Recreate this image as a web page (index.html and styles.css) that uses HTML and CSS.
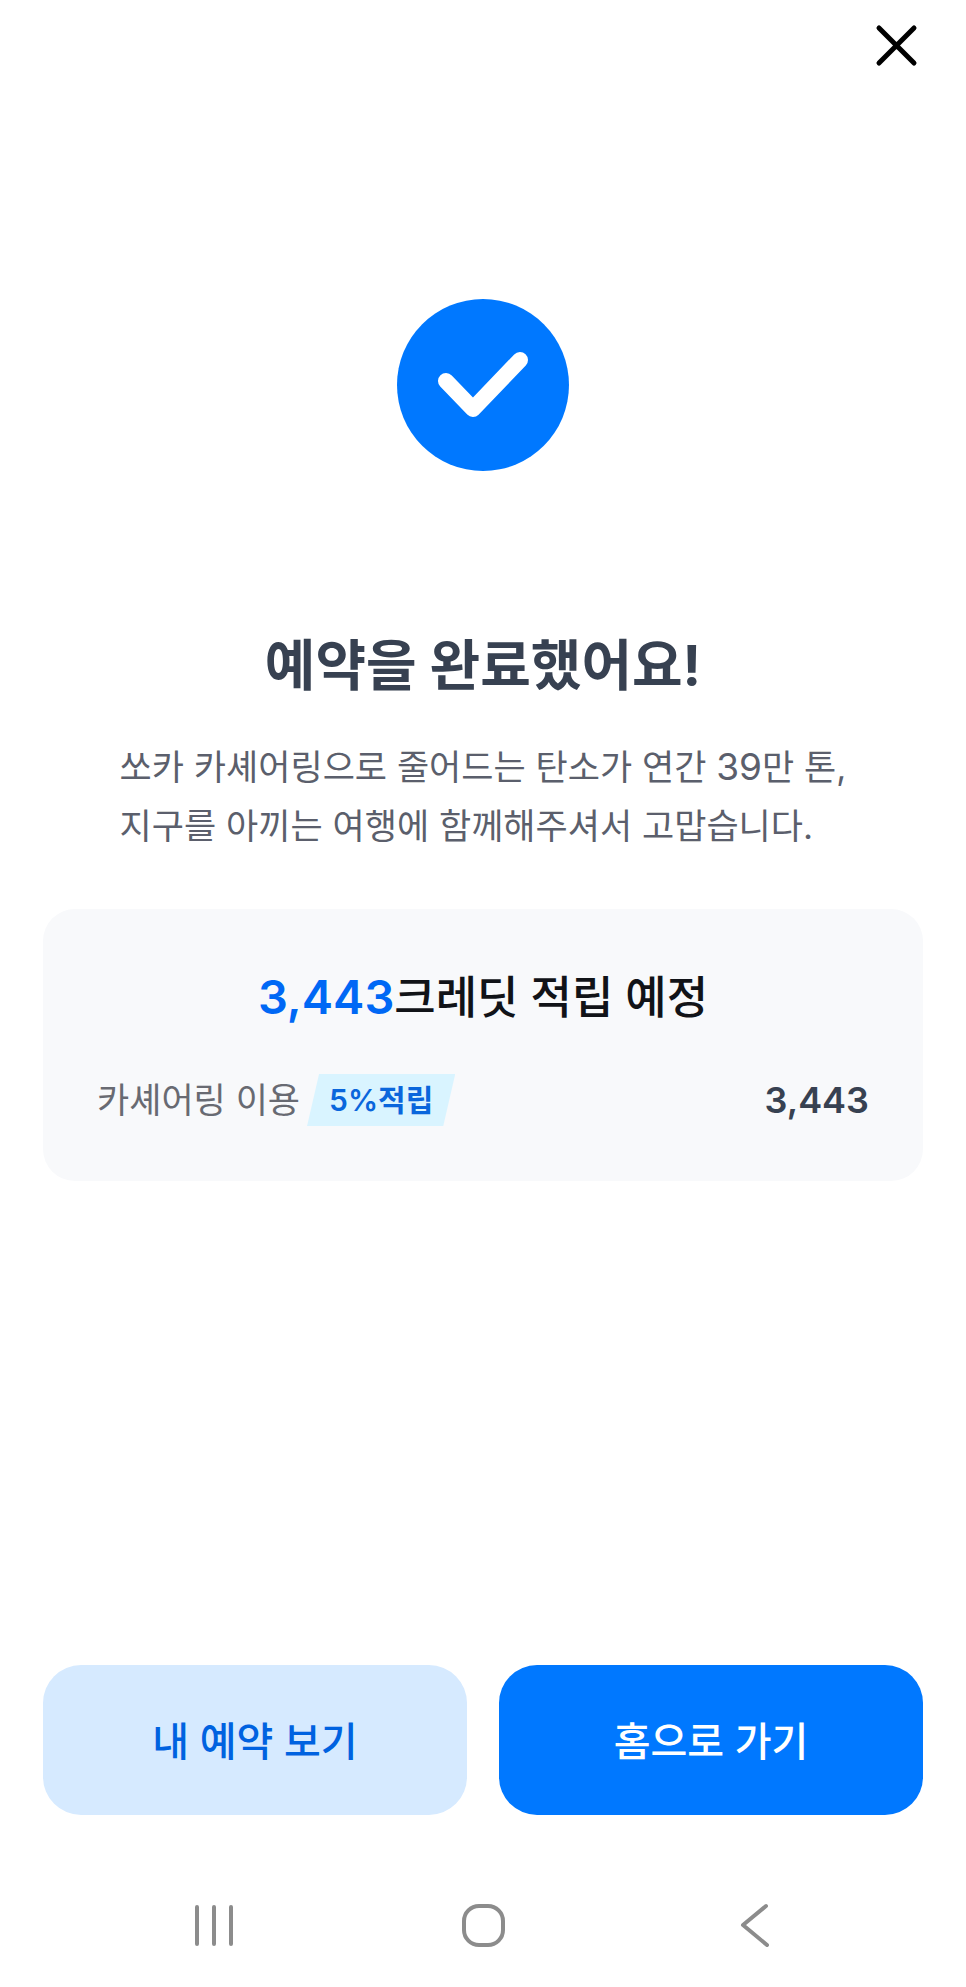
FILE: index.html
```
<!DOCTYPE html>
<html lang="ko">
<head>
<meta charset="UTF-8">
<meta name="viewport" content="width=device-width, initial-scale=1.0">
<title>예약 완료</title>
<link rel="stylesheet" href="styles.css">
</head>
<body>

<header class="top-bar">
    <button class="icon-button" type="button" aria-label="닫기">
        <svg width="44" height="44" viewBox="0 0 44 44" fill="none" stroke="#000" stroke-width="5" stroke-linecap="round">
            <path d="M5 4L40 39M40 4L5 39"/>
        </svg>
    </button>
</header>

<main class="content">
    <svg class="check" width="172" height="172" viewBox="0 0 172 172" fill="none" aria-hidden="true">
        <circle cx="86" cy="86" r="86" fill="#0078ff"/>
        <path d="M49 82L76 110L123 61" stroke="#fff" stroke-width="16" stroke-linecap="round" stroke-linejoin="round"/>
    </svg>

    <h1 class="title">예약을 완료했어요!</h1>
    <p class="message">쏘카 카셰어링으로 줄어드는 탄소가 연간 <span class="number">39</span>만 톤,<br>지구를 아끼는 여행에 함께해주셔서 고맙습니다.</p>

    <section class="card">
        <h2 class="card-title"><span class="credit">3,443</span>크레딧 적립 예정</h2>
        <div class="card-row">
            <span class="card-label">카셰어링 이용</span>
            <span class="badge">5%적립</span>
            <span class="amount">3,443</span>
        </div>
    </section>
</main>

<div class="actions">
    <button class="button button-light" type="button">내 예약 보기</button>
    <button class="button button-primary" type="button">홈으로 가기</button>
</div>

<nav class="system-nav">
    <button class="icon-button" type="button" aria-label="최근 앱">
        <svg width="44" height="44" viewBox="0 0 44 44" fill="none" stroke="#8c8c8c" stroke-width="4" stroke-linecap="round">
            <path d="M5 4V41M22 4V41M39 4V41"/>
        </svg>
    </button>
    <button class="icon-button" type="button" aria-label="홈">
        <svg width="44" height="44" viewBox="0 0 44 44" fill="none" stroke="#8c8c8c" stroke-width="4">
            <rect x="2" y="3" width="39" height="39" rx="15"/>
        </svg>
    </button>
    <button class="icon-button" type="button" aria-label="뒤로">
        <svg width="44" height="44" viewBox="0 0 44 44" fill="none" stroke="#8c8c8c" stroke-width="4" stroke-linecap="round" stroke-linejoin="round">
            <path d="M34 3L11 22L35 42"/>
        </svg>
    </button>
</nav>

</body>
</html>
```
FILE: styles.css
```
* {
    box-sizing: border-box;
}
body {
    display: flex;
    flex-direction: column;
    min-height: 100vh;
    margin: 0;
    background: #fff;
    color: #374151;
    font-family: Inter, "Noto Sans CJK KR", sans-serif;
}
h1, h2, p {
    margin: 0;
}
button {
    border: 0;
    font-family: inherit;
    cursor: pointer;
}
.icon-button {
    padding: 0;
    background: none;
}
.icon-button svg {
    display: block;
}
.top-bar {
    display: flex;
    justify-content: flex-end;
    padding: 24px 48px;
}
.content {
    display: flex;
    flex: 1;
    flex-direction: column;
    align-items: center;
    padding: 207px 43px 0;
}
.title {
    margin-top: 154px;
    font-size: 55px;
    font-weight: 700;
    line-height: 80px;
}
.message {
    margin-top: 32px;
    color: #5b5f6c;
    font-size: 35px;
    line-height: 59px;
}
.number {
    font-size: 37px;
}
.card {
    width: 100%;
    margin-top: 53px;
    padding: 52px 54px 55px;
    border-radius: 32px;
    background: #f8f9fb;
}
.card-title {
    color: #111318;
    font-size: 45px;
    font-weight: 500;
    line-height: 72px;
    text-align: center;
}
.credit {
    color: #0068f5;
    font-size: 47px;
    font-weight: 600;
}
.card-row {
    display: flex;
    align-items: center;
    margin-top: 40px;
    line-height: 52px;
}
.card-label {
    color: #686a72;
    font-size: 35px;
}
.badge {
    margin-left: 7px;
    padding: 0 22px;
    background: #d9f4ff;
    clip-path: polygon(12px 0, 100% 0, calc(100% - 12px) 100%, 0 100%);
    color: #0a66dc;
    font-size: 30px;
    font-weight: 600;
}
.amount {
    margin-left: auto;
    font-size: 36px;
    font-weight: 600;
}
.actions {
    display: flex;
    gap: 32px;
    padding: 0 43px;
}
.button {
    flex: 1;
    height: 150px;
    padding-bottom: 4px;
    border-radius: 38px;
    font-size: 40px;
    font-weight: 500;
}
.button-light {
    background: #d6eaff;
    color: #0062e0;
}
.button-primary {
    background: #0078ff;
    color: #fff;
}
.system-nav {
    display: grid;
    grid-template-columns: repeat(3, 1fr);
    justify-items: center;
    padding: 88px 77px 40px 79px;
}
```
